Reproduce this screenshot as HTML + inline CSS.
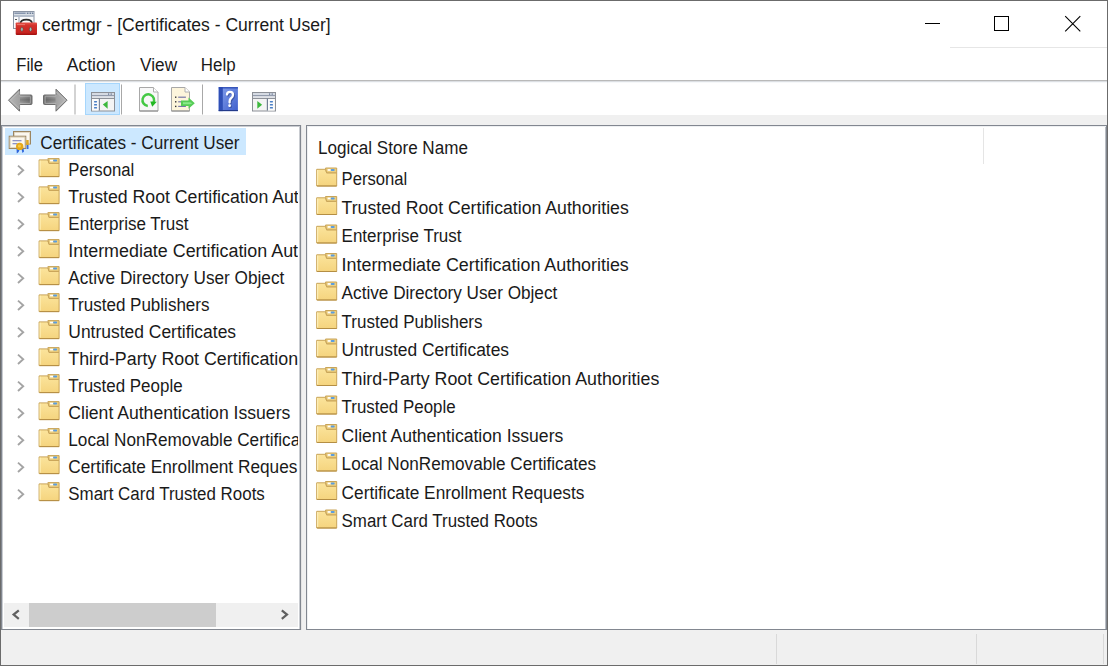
<!DOCTYPE html>
<html><head><meta charset="utf-8"><title>certmgr</title>
<style>html,body{margin:0;padding:0;background:#fff;width:1108px;height:666px;overflow:hidden;font-family:"Liberation Sans",sans-serif} svg{display:block}</style>
</head><body>
<svg width="1108" height="666" viewBox="0 0 1108 666" font-family="Liberation Sans, sans-serif"><defs>
<linearGradient id="fg2" x1="0" y1="0" x2="0" y2="1">
 <stop offset="0" stop-color="#fbe49c"/><stop offset="1" stop-color="#f5d47e"/>
</linearGradient>
<symbol id="folder" viewBox="0 0 21 19" overflow="visible">
 <path d="M0.5 1.8 H9.3 L10.4 5.3 H20.5 V18.5 H0.5 Z" fill="url(#fg2)" stroke="#c9a458" stroke-width="1"/>
 <path d="M9.3 0.5 H20.5 V5.3 H10.4 Z" fill="#eccf80" stroke="#c9a458" stroke-width="1"/>
 <rect x="11.5" y="1.6" width="3" height="1.7" fill="#ffffff"/>
 <rect x="14.5" y="1.4" width="4" height="2" rx="1" fill="#5a9de0"/>
 <path d="M1 18.5 H20.5" stroke="#b48e44" stroke-width="1"/>
 <path d="M1.5 2.5 V17.5" stroke="#fff3c0" stroke-width="1"/>
</symbol>
<linearGradient id="arr" x1="0" y1="0" x2="1" y2="0">
 <stop offset="0" stop-color="#b8b8b8"/><stop offset="0.45" stop-color="#a2a2a2"/><stop offset="1" stop-color="#767676"/>
</linearGradient>
<linearGradient id="arrv" x1="0" y1="0" x2="0" y2="1">
 <stop offset="0" stop-color="#000" stop-opacity="0"/><stop offset="0.5" stop-color="#000" stop-opacity="0.18"/><stop offset="1" stop-color="#000" stop-opacity="0"/>
</linearGradient>
<linearGradient id="helpg" x1="0" y1="0" x2="1" y2="1">
 <stop offset="0" stop-color="#86a2ec"/><stop offset="1" stop-color="#3f5fcc"/>
</linearGradient>
<linearGradient id="redg" x1="0" y1="0" x2="0" y2="1">
 <stop offset="0" stop-color="#e8554c"/><stop offset="0.25" stop-color="#d3322c"/><stop offset="0.8" stop-color="#c82420"/><stop offset="1" stop-color="#a01010"/>
</linearGradient>
<clipPath id="lclip"><rect x="2" y="126" width="296" height="477"/></clipPath>
</defs>
<rect x="0" y="0" width="1108" height="666" fill="#ffffff"/>
<rect x="0" y="115" width="1108" height="551" fill="#f0f0f0"/>
<rect x="0.5" y="0.5" width="1107" height="665" fill="none" stroke="#6b6b6b" stroke-width="1"/>
<g>
<rect x="13.5" y="11.5" width="20.5" height="17" fill="#fafbfc" stroke="#8a94a4"/>
<rect x="14" y="12" width="20" height="2.6" fill="#c4ccd8"/>
<rect x="14.5" y="12.6" width="11" height="1.4" fill="#8796ae"/>
<rect x="27" y="12.6" width="1.4" height="1.4" fill="#6e7f99"/><rect x="29.6" y="12.6" width="1.4" height="1.4" fill="#6e7f99"/><rect x="32" y="12.6" width="1.4" height="1.4" fill="#6e7f99"/>
<rect x="14" y="15.2" width="20" height="1.6" fill="#a3aec0"/>
<rect x="18.5" y="17" width="1" height="11" fill="#8f9bb0"/>
<rect x="15" y="19" width="2" height="1" fill="#555"/>
<path d="M20.5 23.5 Q20.5 19.6 26.3 19.6 Q32 19.6 32 23.5" fill="none" stroke="#2a2a2a" stroke-width="1.7"/>
<rect x="15.7" y="22.4" width="21.3" height="12.5" rx="0.8" fill="url(#redg)"/>
<rect x="17" y="24.3" width="8" height="0.8" fill="#f08a80"/>
<ellipse cx="21.9" cy="29.3" rx="1.2" ry="2.1" fill="#9fc4bc" stroke="#5a3030" stroke-width="0.5"/>
<ellipse cx="30.6" cy="29.3" rx="1.2" ry="2.1" fill="#9fc4bc" stroke="#5a3030" stroke-width="0.5"/>
</g>
<text x="42.10" y="30.60" font-size="18" textLength="288.61" lengthAdjust="spacingAndGlyphs" fill="#1a1a1a">certmgr - [Certificates - Current User]</text>
<path d="M925 23.5 H940" stroke="#000" stroke-width="1"/>
<rect x="994.5" y="16.5" width="14" height="14" fill="none" stroke="#000" stroke-width="1"/>
<path d="M1065.2 16.2 L1080.3 31.3 M1080.3 16.2 L1065.2 31.3" stroke="#000" stroke-width="1.1"/>
<rect x="950" y="47" width="157" height="1" fill="#e6e6e6"/>
<text x="16.30" y="71.00" font-size="18" textLength="26.71" lengthAdjust="spacingAndGlyphs" fill="#1a1a1a">File</text>
<text x="66.70" y="71.00" font-size="18" textLength="48.91" lengthAdjust="spacingAndGlyphs" fill="#1a1a1a">Action</text>
<text x="140.10" y="71.00" font-size="18" textLength="36.96" lengthAdjust="spacingAndGlyphs" fill="#1a1a1a">View</text>
<text x="200.80" y="71.00" font-size="18" textLength="34.79" lengthAdjust="spacingAndGlyphs" fill="#1a1a1a">Help</text>
<rect x="1" y="80" width="1106" height="1" fill="#b9b9b9"/>
<rect x="1" y="81" width="1106" height="1" fill="#dcdfe3"/>
<rect x="1" y="82" width="1106" height="1" fill="#f6f8fa"/>
<g><path d="M8.5 100.2 L19.5 89.2 V95 H31 Q32 95 32 96 V103.5 Q32 104.5 31 104.5 H19.5 V111.2 Z" fill="url(#arr)" stroke="#6c6c6c" stroke-width="1"/><rect x="20" y="96.5" width="11" height="6.5" fill="url(#arrv)"/><path d="M8.5 100.2 L19.5 89.2 V95 H31 Q32 95 32 96 V103.5 Q32 104.5 31 104.5 H19.5 V111.2 Z" fill="none" stroke="#c4c4c4" stroke-width="0.7" transform="translate(21 100.2) scale(0.85 0.78) translate(-21 -100.2)"/></g>
<g transform="translate(75.5 0) scale(-1 1)"><path d="M8.5 100.2 L19.5 89.2 V95 H31 Q32 95 32 96 V103.5 Q32 104.5 31 104.5 H19.5 V111.2 Z" fill="url(#arr)" stroke="#6c6c6c" stroke-width="1"/><rect x="20" y="96.5" width="11" height="6.5" fill="url(#arrv)"/><path d="M8.5 100.2 L19.5 89.2 V95 H31 Q32 95 32 96 V103.5 Q32 104.5 31 104.5 H19.5 V111.2 Z" fill="none" stroke="#c4c4c4" stroke-width="0.7" transform="translate(21 100.2) scale(0.85 0.78) translate(-21 -100.2)"/></g>
<rect x="74.5" y="84.5" width="1" height="30" fill="#a8a8a8"/>
<rect x="85.5" y="83.5" width="34" height="31" fill="#cce8ff" stroke="#a6d6fc"/>
<rect x="121" y="84.5" width="1" height="30" fill="#a8a8a8"/>
<rect x="91.5" y="92.5" width="23" height="18.5" fill="#f4f4f4" stroke="#8c9097"/><rect x="92" y="93" width="22" height="2.2" fill="#d6dbe3"/><rect x="108" y="93.3" width="1.2" height="1.6" fill="#7886a0"/><rect x="110.6" y="93.3" width="1.2" height="1.6" fill="#7886a0"/><rect x="92" y="95.2" width="22" height="1" fill="#7d889c"/><rect x="92" y="96.4" width="22" height="1.3" fill="#d6dae2"/><rect x="92" y="98" width="22" height="1" fill="#8e9299"/><rect x="98.7" y="98.5" width="1.2" height="12" fill="#6f7c92"/>
<rect x="92" y="99" width="6.5" height="11.5" fill="#fbfbfb"/>
<rect x="94" y="101" width="3.1" height="1.4" rx="0.6" fill="#4a7fc6"/>
<rect x="94" y="104.1" width="3.1" height="1.4" rx="0.6" fill="#4a7fc6"/>
<rect x="94" y="107.1" width="3.1" height="1.4" rx="0.6" fill="#4a7fc6"/>
<path d="M102.8 104.6 L107.6 100.9 V108.8 Z" fill="#3cb83c"/>
<path d="M139.5 87.5 H153.5 L158 92 V111 H139.5 Z" fill="#f8f8f8" stroke="#a8a8a8"/>
<path d="M139.5 111 H158" stroke="#8c8c8c"/>
<path d="M153.5 87.5 V92 H158" fill="#ffffff" stroke="#b0b0b0"/>
<path d="M147.8 105.9 A5.8 5.8 0 1 1 153.2 103.2" fill="none" stroke="#44c844" stroke-width="2.5"/>
<path d="M150.3 101.6 L156.8 101.8 L152.2 106.8 Z" fill="#22b822"/>
<path d="M171.5 87.5 H185 L189.5 92 V111 H171.5 Z" fill="#fdf5dc" stroke="#a8a8a8"/>
<path d="M171.5 111 H189.5" stroke="#8c8c8c"/>
<path d="M185 87.5 V92 H189.5" fill="#ffffff" stroke="#b0b0b0"/>
<rect x="175" y="96.5" width="1.4" height="1.4" fill="#333"/><rect x="178.2" y="96.6" width="7.7" height="1.2" fill="#7878a8"/>
<rect x="175" y="101.1" width="1.4" height="1.4" fill="#333"/><rect x="178.2" y="101.19999999999999" width="7.7" height="1.2" fill="#7878a8"/>
<rect x="175" y="105.7" width="1.4" height="1.4" fill="#333"/><rect x="178.2" y="105.8" width="7.7" height="1.2" fill="#7878a8"/>
<path d="M181 100.5 H188.5 V97.6 L194.8 103.3 L188.5 108.7 V106 H181 Z" fill="#56cc56"/>
<path d="M183 102.3 H190 L192.5 103.3 L190 104.3 H183 Z" fill="#8be88b"/>
<rect x="202" y="84.5" width="1" height="30" fill="#a8a8a8"/>
<rect x="218.7" y="87.2" width="19.2" height="23.9" fill="url(#helpg)"/>
<rect x="218.7" y="87.2" width="4.1" height="23.9" fill="#2f4fb6"/>
<rect x="218.7" y="87.2" width="19.2" height="1.2" fill="#2545b0"/>
<rect x="218.7" y="110" width="19.2" height="1.1" fill="#233a8a"/>
<path d="M228 95.5 Q228 92.8 231 92.8 Q234 92.8 234 95.8 Q234 98 232 99.3 Q230.6 100.3 230.6 102.8 V103.6" fill="none" stroke="#283c80" stroke-opacity="0.55" stroke-width="2.3" stroke-linecap="round"/>
<rect x="229.3" y="105.3" width="2.6" height="2.6" rx="0.8" fill="#283c80" fill-opacity="0.55"/>
<path d="M227 94.5 Q227 91.8 230 91.8 Q233 91.8 233 94.8 Q233 97 231 98.3 Q229.6 99.3 229.6 101.8 V102.6" fill="none" stroke="#ffffff" stroke-width="2.3" stroke-linecap="round"/>
<rect x="228.3" y="104.3" width="2.6" height="2.6" rx="0.8" fill="#ffffff"/>
<rect x="252.5" y="92.5" width="23" height="18.5" fill="#f4f4f4" stroke="#8c9097"/><rect x="253" y="93" width="22" height="2.2" fill="#d6dbe3"/><rect x="269" y="93.3" width="1.2" height="1.6" fill="#7886a0"/><rect x="271.6" y="93.3" width="1.2" height="1.6" fill="#7886a0"/><rect x="253" y="95.2" width="22" height="1" fill="#7d889c"/><rect x="253" y="96.4" width="22" height="1.3" fill="#d6dae2"/><rect x="253" y="98" width="22" height="1" fill="#8e9299"/><rect x="266.8" y="98.5" width="1.2" height="12" fill="#6f7c92"/>
<rect x="268" y="99" width="6.5" height="11.5" fill="#fbfbfb"/>
<rect x="269.8" y="101" width="3.2" height="1.4" rx="0.6" fill="#4a7fc6"/>
<rect x="269.8" y="104.1" width="3.2" height="1.4" rx="0.6" fill="#4a7fc6"/>
<rect x="269.8" y="107.1" width="3.2" height="1.4" rx="0.6" fill="#4a7fc6"/>
<path d="M257.3 100.9 L262.1 104.8 L257.3 108.8 Z" fill="#3cb83c"/>
<rect x="1" y="125" width="300" height="505" fill="#828790"/>
<rect x="2" y="126" width="298" height="503" fill="#c9ccd1"/>
<rect x="3" y="127" width="296" height="502" fill="#ffffff"/>
<rect x="306" y="125" width="801" height="505" fill="#828790"/>
<rect x="307" y="126" width="799" height="503" fill="#eef0f2"/>
<rect x="308" y="127" width="797" height="502" fill="#ffffff"/>
<rect x="1105" y="127" width="1" height="502" fill="#b9bdc3"/>
<rect x="301" y="125" width="1" height="505" fill="#e4e4e4"/>
<rect x="5" y="128" width="241" height="27" fill="#cce8ff"/>
<g>
<rect x="13.5" y="131.5" width="17" height="12.5" fill="#fbf8f0" stroke="#9c8560"/>
<rect x="14.5" y="132.5" width="15" height="10.5" fill="none" stroke="#d8cbb0" stroke-width="0.7"/>
<rect x="9.2" y="136.2" width="16.6" height="12.3" fill="#fbf8f0" stroke="#9c8560"/>
<rect x="10.2" y="137.2" width="14.6" height="10.3" fill="none" stroke="#d8cbb0" stroke-width="0.7"/>
<rect x="12.5" y="140" width="9" height="1.3" fill="#8d92c8"/><rect x="12.5" y="143" width="5" height="1.3" fill="#8d92c8"/>
<rect x="26.2" y="140" width="2.5" height="5" fill="#e0a820"/>
<rect x="26.7" y="145" width="1.8" height="4" fill="#3a6ad8"/>
<path d="M16.5 148.5 L16.8 153.4 L18.6 152 L19.9 149 Z M21.5 149 L22.5 153 L24 151.5 L23.5 148.5 Z" fill="#2c64dc"/>
<circle cx="19.7" cy="146.4" r="3.7" fill="#e6a818"/>
<circle cx="19.4" cy="146" r="1.6" fill="#f2c850"/>
</g>
<text x="40.30" y="149.00" font-size="18" textLength="199.20" lengthAdjust="spacingAndGlyphs" fill="#1a1a1a">Certificates - Current User</text>
<path d="M18 165.6 L23.2 170.3 L18 175.0" fill="none" stroke="#a4a4a4" stroke-width="1.9"/>
<use href="#folder" x="38.6" y="158.1" width="21" height="19"/>
<text x="68.30" y="175.80" font-size="18" textLength="65.90" lengthAdjust="spacingAndGlyphs" fill="#1a1a1a" clip-path="url(#lclip)">Personal</text>
<path d="M18 192.6 L23.2 197.3 L18 202.0" fill="none" stroke="#a4a4a4" stroke-width="1.9"/>
<use href="#folder" x="38.6" y="185.1" width="21" height="19"/>
<text x="68.30" y="202.80" font-size="18" textLength="287.50" lengthAdjust="spacingAndGlyphs" fill="#1a1a1a" clip-path="url(#lclip)">Trusted Root Certification Authorities</text>
<path d="M18 219.6 L23.2 224.3 L18 229.0" fill="none" stroke="#a4a4a4" stroke-width="1.9"/>
<use href="#folder" x="38.6" y="212.1" width="21" height="19"/>
<text x="68.30" y="229.80" font-size="18" textLength="120.20" lengthAdjust="spacingAndGlyphs" fill="#1a1a1a" clip-path="url(#lclip)">Enterprise Trust</text>
<path d="M18 246.6 L23.2 251.3 L18 256.0" fill="none" stroke="#a4a4a4" stroke-width="1.9"/>
<use href="#folder" x="38.6" y="239.1" width="21" height="19"/>
<text x="68.30" y="256.80" font-size="18" textLength="287.49" lengthAdjust="spacingAndGlyphs" fill="#1a1a1a" clip-path="url(#lclip)">Intermediate Certification Authorities</text>
<path d="M18 273.6 L23.2 278.3 L18 283.0" fill="none" stroke="#a4a4a4" stroke-width="1.9"/>
<use href="#folder" x="38.6" y="266.1" width="21" height="19"/>
<text x="68.30" y="283.80" font-size="18" textLength="215.99" lengthAdjust="spacingAndGlyphs" fill="#1a1a1a" clip-path="url(#lclip)">Active Directory User Object</text>
<path d="M18 300.6 L23.2 305.3 L18 310.0" fill="none" stroke="#a4a4a4" stroke-width="1.9"/>
<use href="#folder" x="38.6" y="293.1" width="21" height="19"/>
<text x="68.30" y="310.80" font-size="18" textLength="141.20" lengthAdjust="spacingAndGlyphs" fill="#1a1a1a" clip-path="url(#lclip)">Trusted Publishers</text>
<path d="M18 327.6 L23.2 332.3 L18 337.0" fill="none" stroke="#a4a4a4" stroke-width="1.9"/>
<use href="#folder" x="38.6" y="320.1" width="21" height="19"/>
<text x="68.30" y="337.80" font-size="18" textLength="167.80" lengthAdjust="spacingAndGlyphs" fill="#1a1a1a" clip-path="url(#lclip)">Untrusted Certificates</text>
<path d="M18 354.6 L23.2 359.3 L18 364.0" fill="none" stroke="#a4a4a4" stroke-width="1.9"/>
<use href="#folder" x="38.6" y="347.1" width="21" height="19"/>
<text x="68.30" y="364.80" font-size="18" textLength="318.01" lengthAdjust="spacingAndGlyphs" fill="#1a1a1a" clip-path="url(#lclip)">Third-Party Root Certification Authorities</text>
<path d="M18 381.6 L23.2 386.3 L18 391.0" fill="none" stroke="#a4a4a4" stroke-width="1.9"/>
<use href="#folder" x="38.6" y="374.1" width="21" height="19"/>
<text x="68.30" y="391.80" font-size="18" textLength="114.29" lengthAdjust="spacingAndGlyphs" fill="#1a1a1a" clip-path="url(#lclip)">Trusted People</text>
<path d="M18 408.6 L23.2 413.3 L18 418.0" fill="none" stroke="#a4a4a4" stroke-width="1.9"/>
<use href="#folder" x="38.6" y="401.1" width="21" height="19"/>
<text x="68.30" y="418.80" font-size="18" textLength="222.00" lengthAdjust="spacingAndGlyphs" fill="#1a1a1a" clip-path="url(#lclip)">Client Authentication Issuers</text>
<path d="M18 435.6 L23.2 440.3 L18 445.0" fill="none" stroke="#a4a4a4" stroke-width="1.9"/>
<use href="#folder" x="38.6" y="428.1" width="21" height="19"/>
<text x="68.30" y="445.80" font-size="18" textLength="254.81" lengthAdjust="spacingAndGlyphs" fill="#1a1a1a" clip-path="url(#lclip)">Local NonRemovable Certificates</text>
<path d="M18 462.6 L23.2 467.3 L18 472.0" fill="none" stroke="#a4a4a4" stroke-width="1.9"/>
<use href="#folder" x="38.6" y="455.1" width="21" height="19"/>
<text x="68.30" y="472.80" font-size="18" textLength="229.10" lengthAdjust="spacingAndGlyphs" fill="#1a1a1a" clip-path="url(#lclip)">Certificate Enrollment Reques</text>
<path d="M18 489.6 L23.2 494.3 L18 499.0" fill="none" stroke="#a4a4a4" stroke-width="1.9"/>
<use href="#folder" x="38.6" y="482.1" width="21" height="19"/>
<text x="68.30" y="499.80" font-size="18" textLength="196.51" lengthAdjust="spacingAndGlyphs" fill="#1a1a1a" clip-path="url(#lclip)">Smart Card Trusted Roots</text>
<rect x="4" y="603" width="294" height="24" fill="#f0f0f0"/>
<rect x="29" y="603" width="187" height="24" fill="#cdcdcd"/>
<path d="M18.8 610.3 L13.6 614.6 L18.8 618.9" fill="none" stroke="#606060" stroke-width="2.2"/>
<path d="M281.8 610.3 L287 614.6 L281.8 618.9" fill="none" stroke="#606060" stroke-width="2.2"/>
<text x="318.00" y="153.50" font-size="18" textLength="149.90" lengthAdjust="spacingAndGlyphs" fill="#1a1a1a">Logical Store Name</text>
<rect x="983" y="128" width="1" height="36" fill="#e5e5e5"/>
<use href="#folder" x="316.2" y="167.5" width="21" height="19"/>
<text x="341.60" y="185.20" font-size="18" textLength="65.60" lengthAdjust="spacingAndGlyphs" fill="#1a1a1a">Personal</text>
<use href="#folder" x="316.2" y="196.0" width="21" height="19"/>
<text x="341.60" y="213.70" font-size="18" textLength="287.20" lengthAdjust="spacingAndGlyphs" fill="#1a1a1a">Trusted Root Certification Authorities</text>
<use href="#folder" x="316.2" y="224.5" width="21" height="19"/>
<text x="341.60" y="242.20" font-size="18" textLength="119.90" lengthAdjust="spacingAndGlyphs" fill="#1a1a1a">Enterprise Trust</text>
<use href="#folder" x="316.2" y="253.0" width="21" height="19"/>
<text x="341.60" y="270.70" font-size="18" textLength="287.19" lengthAdjust="spacingAndGlyphs" fill="#1a1a1a">Intermediate Certification Authorities</text>
<use href="#folder" x="316.2" y="281.5" width="21" height="19"/>
<text x="341.60" y="299.20" font-size="18" textLength="215.69" lengthAdjust="spacingAndGlyphs" fill="#1a1a1a">Active Directory User Object</text>
<use href="#folder" x="316.2" y="310.0" width="21" height="19"/>
<text x="341.60" y="327.70" font-size="18" textLength="140.90" lengthAdjust="spacingAndGlyphs" fill="#1a1a1a">Trusted Publishers</text>
<use href="#folder" x="316.2" y="338.5" width="21" height="19"/>
<text x="341.60" y="356.20" font-size="18" textLength="167.50" lengthAdjust="spacingAndGlyphs" fill="#1a1a1a">Untrusted Certificates</text>
<use href="#folder" x="316.2" y="367.0" width="21" height="19"/>
<text x="341.60" y="384.70" font-size="18" textLength="317.71" lengthAdjust="spacingAndGlyphs" fill="#1a1a1a">Third-Party Root Certification Authorities</text>
<use href="#folder" x="316.2" y="395.5" width="21" height="19"/>
<text x="341.60" y="413.20" font-size="18" textLength="113.99" lengthAdjust="spacingAndGlyphs" fill="#1a1a1a">Trusted People</text>
<use href="#folder" x="316.2" y="424.0" width="21" height="19"/>
<text x="341.60" y="441.70" font-size="18" textLength="221.70" lengthAdjust="spacingAndGlyphs" fill="#1a1a1a">Client Authentication Issuers</text>
<use href="#folder" x="316.2" y="452.5" width="21" height="19"/>
<text x="341.60" y="470.20" font-size="18" textLength="254.51" lengthAdjust="spacingAndGlyphs" fill="#1a1a1a">Local NonRemovable Certificates</text>
<use href="#folder" x="316.2" y="481.0" width="21" height="19"/>
<text x="341.60" y="498.70" font-size="18" textLength="242.79" lengthAdjust="spacingAndGlyphs" fill="#1a1a1a">Certificate Enrollment Requests</text>
<use href="#folder" x="316.2" y="509.5" width="21" height="19"/>
<text x="341.60" y="527.20" font-size="18" textLength="196.21" lengthAdjust="spacingAndGlyphs" fill="#1a1a1a">Smart Card Trusted Roots</text>
<rect x="776" y="634" width="1" height="30" fill="#d9d9d9"/>
<rect x="976" y="634" width="1" height="30" fill="#d9d9d9"/>
<rect x="1103" y="634" width="1" height="30" fill="#d9d9d9"/></svg>
</body></html>
